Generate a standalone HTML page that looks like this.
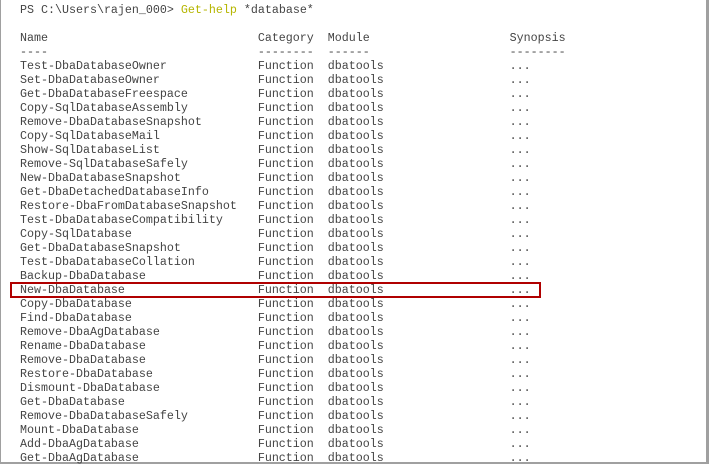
<!DOCTYPE html>
<html><head><meta charset="utf-8"><style>
html,body{margin:0;padding:0;background:#fff;}
body{width:709px;height:464px;overflow:hidden;position:relative;}
.frame{position:absolute;left:0;top:0;width:705px;height:462px;border-left:1px solid #a0a0a0;border-right:3px solid #a0a0a0;border-bottom:2px solid #a0a0a0;}
pre{position:absolute;left:20px;top:3px;margin:0;font-family:"Liberation Mono",monospace;font-size:11.67px;line-height:14px;color:#444;white-space:pre;}
.y{color:#b5b500;}
.box{position:absolute;left:10px;top:282px;width:527px;height:12px;border:2px solid #b00000;}
</style></head><body>
<div class="frame"></div>
<pre>PS C:\Users\rajen_000> <span class="y">Get-help</span> *database*

Name                              Category  Module                    Synopsis
----                              --------  ------                    --------
Test-DbaDatabaseOwner             Function  dbatools                  ...
Set-DbaDatabaseOwner              Function  dbatools                  ...
Get-DbaDatabaseFreespace          Function  dbatools                  ...
Copy-SqlDatabaseAssembly          Function  dbatools                  ...
Remove-DbaDatabaseSnapshot        Function  dbatools                  ...
Copy-SqlDatabaseMail              Function  dbatools                  ...
Show-SqlDatabaseList              Function  dbatools                  ...
Remove-SqlDatabaseSafely          Function  dbatools                  ...
New-DbaDatabaseSnapshot           Function  dbatools                  ...
Get-DbaDetachedDatabaseInfo       Function  dbatools                  ...
Restore-DbaFromDatabaseSnapshot   Function  dbatools                  ...
Test-DbaDatabaseCompatibility     Function  dbatools                  ...
Copy-SqlDatabase                  Function  dbatools                  ...
Get-DbaDatabaseSnapshot           Function  dbatools                  ...
Test-DbaDatabaseCollation         Function  dbatools                  ...
Backup-DbaDatabase                Function  dbatools                  ...
New-DbaDatabase                   Function  dbatools                  ...
Copy-DbaDatabase                  Function  dbatools                  ...
Find-DbaDatabase                  Function  dbatools                  ...
Remove-DbaAgDatabase              Function  dbatools                  ...
Rename-DbaDatabase                Function  dbatools                  ...
Remove-DbaDatabase                Function  dbatools                  ...
Restore-DbaDatabase               Function  dbatools                  ...
Dismount-DbaDatabase              Function  dbatools                  ...
Get-DbaDatabase                   Function  dbatools                  ...
Remove-DbaDatabaseSafely          Function  dbatools                  ...
Mount-DbaDatabase                 Function  dbatools                  ...
Add-DbaAgDatabase                 Function  dbatools                  ...
Get-DbaAgDatabase                 Function  dbatools                  ...</pre>
<div class="box"></div>
</body></html>
